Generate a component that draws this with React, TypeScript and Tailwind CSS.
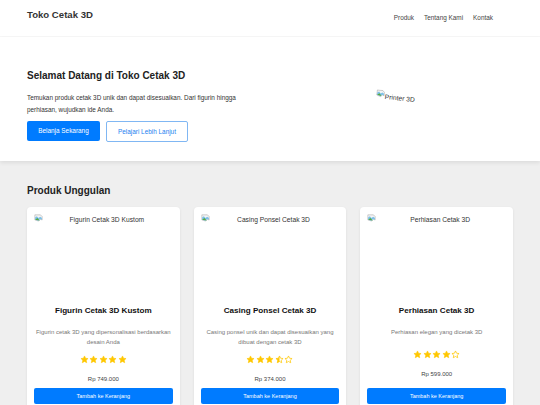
import { useId } from 'react'

const products = [
    {
        name: 'Figurin Cetak 3D Kustom',
        desc: 'Figurin cetak 3D yang dipersonalisasi berdasarkan desain Anda',
        rating: 5,
        price: 'Rp 749.000',
    },
    {
        name: 'Casing Ponsel Cetak 3D',
        desc: 'Casing ponsel unik dan dapat disesuaikan yang dibuat dengan cetak 3D',
        rating: 3.5,
        price: 'Rp 374.000',
    },
    {
        name: 'Perhiasan Cetak 3D',
        desc: 'Perhiasan elegan yang dicetak 3D',
        rating: 4,
        price: 'Rp 599.000',
    },
]

const STAR = 'M12 2.5l2.9 6.1 6.6.8-4.9 4.6 1.3 6.6L12 17.3l-5.9 3.3 1.3-6.6-4.9-4.6 6.6-.8L12 2.5z'

// Broken image glyph, like the one the browser draws
function BrokenImage() {
    return (
        <svg width="9" height="9" viewBox="0 0 16 16" className="shrink-0">
            <path d="M1.5 1.5h10l3 3v6l-3-1-3 3-7-2z" fill="#f4f4f4" stroke="#a8a8a8" />
            <path d="M2 6l3-2 3 3 3-2 3 2v3l-3-1-3 3-6-2z" fill="#7cc0e8" />
            <path d="M2 10l4-3 3 3 1 1.5-8-1.5z" fill="#5aa83c" />
        </svg>
    )
}

function Star({ kind }: { kind: 'full' | 'half' | 'empty' }) {
    const id = useId()
    if (kind === 'full') {
        return (
            <svg width="9" height="9" viewBox="0 0 24 24">
                <path d={STAR} fill="#ffc700" stroke="#ffc700" strokeWidth="1.5" strokeLinejoin="round" />
            </svg>
        )
    }
    if (kind === 'half') {
        return (
            <svg width="9" height="9" viewBox="0 0 24 24">
                <defs>
                    <clipPath id={id}>
                        <rect x="0" y="0" width="12" height="24" />
                    </clipPath>
                </defs>
                <path d={STAR} fill="#ffc700" clipPath={`url(#${id})`} />
                <path d={STAR} fill="none" stroke="#ffc700" strokeWidth="2" strokeLinejoin="round" />
            </svg>
        )
    }
    return (
        <svg width="9" height="9" viewBox="0 0 24 24">
            <path d={STAR} fill="none" stroke="#ffc700" strokeWidth="2" strokeLinejoin="round" />
        </svg>
    )
}

function Rating({ value }: { value: number }) {
    const stars = [1, 2, 3, 4, 5].map(i =>
        value >= i ? 'full' : value >= i - 0.5 ? 'half' : 'empty'
    ) as ('full' | 'half' | 'empty')[]
    return (
        <div className="flex justify-center gap-[0.5px]">
            {stars.map((s, i) => <Star key={i} kind={s} />)}
        </div>
    )
}

export default function App() {
    return (
        <div className="min-h-[405px] bg-[#efefef] text-[#333] font-['Liberation_Sans',Arial,sans-serif]">
            <header className="bg-white h-[37px] border-b border-[#f7f7f7] flex items-start justify-between pl-[27px] pr-[47px]">
                <h1 className="text-[9.6px] leading-[12px] font-bold text-[#333] pt-[9px]">Toko Cetak 3D</h1>
                <nav className="flex gap-[10px] pt-[14px] text-[6.4px] leading-[8px] text-[#444]">
                    <a>Produk</a>
                    <a>Tentang Kami</a>
                    <a>Kontak</a>
                </nav>
            </header>

            <section className="bg-white shadow-[0_2px_4px_rgba(0,0,0,0.08)] px-[27px] pt-[33px] pb-[19px] flex items-start">
                <div className="w-[236px]">
                    <h2 className="text-[10px] leading-[12px] font-bold text-[#222]">Selamat Datang di Toko Cetak 3D</h2>
                    <p className="mt-[10px] text-[6.4px] leading-[11.5px] text-[#333]">
                        Temukan produk cetak 3D unik dan dapat disesuaikan. Dari figurin hingga perhiasan, wujudkan ide Anda.
                    </p>
                    <div className="mt-[6px] flex gap-[6px]">
                        <button className="w-[73px] h-[20px] rounded-[2px] bg-[#007bff] text-white text-[6.4px]">
                            Belanja Sekarang
                        </button>
                        <button className="w-[82px] h-[21px] rounded-[2px] border border-[#80b7f3] bg-white text-[#1a7ff0] text-[6.4px]">
                            Pelajari Lebih Lanjut
                        </button>
                    </div>
                </div>
                <div className="flex-1 pl-[113px] pt-[19px]">
                    <div className="flex items-start rotate-[6deg] origin-left text-[6.7px] leading-[9px] text-[#333]">
                        <BrokenImage />
                        <span className="mt-[2px]">Printer 3D</span>
                    </div>
                </div>
            </section>

            <section className="px-[27px] pt-[24px]">
                <h2 className="text-[10px] leading-[12px] font-bold text-[#222]">Produk Unggulan</h2>
                <div className="mt-[10px] grid grid-cols-3 gap-[14px]">
                    {products.map(p => (
                        <div key={p.name} className="bg-white rounded-[4px] shadow-[0_1px_3px_rgba(0,0,0,0.08)] px-[7px] pt-[7px] pb-[10px] flex flex-col text-center h-[207px]">
                            <div className="h-[80px] flex items-start">
                                <BrokenImage />
                                <span className="flex-1 text-[6.7px] leading-[9px] text-[#333] pr-[2px] pt-[1px]">{p.name}</span>
                            </div>
                            <h3 className="mt-[12px] text-[8.1px] leading-[10px] font-bold text-[#111]">{p.name}</h3>
                            <p className="mt-[11px] min-h-[15px] text-[6px] leading-[10px] text-[#777]">{p.desc}</p>
                            <div className="mt-[8px]">
                                <Rating value={p.rating} />
                            </div>
                            <p className="mt-[11px] text-[6px] leading-[8px] text-[#444]">{p.price}</p>
                            <button className="mt-auto h-[16px] rounded-[2px] bg-[#007bff] text-white text-[5.5px]">
                                Tambah ke Keranjang
                            </button>
                        </div>
                    ))}
                </div>
            </section>
        </div>
    )
}
